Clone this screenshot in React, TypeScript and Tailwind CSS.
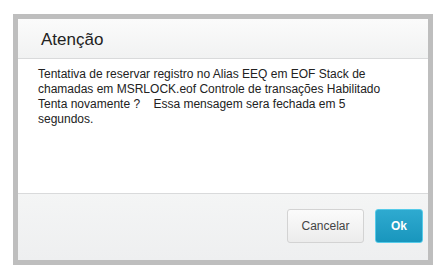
export default function App() {
  return (
    <div className="w-[443px] h-[269px] bg-white pt-[14px] pl-[13px]" style={{ fontFamily: '"Liberation Sans", Arial, sans-serif' }}>
      <div className="w-[420px] h-[251px] border-[5px] border-[#bebebe] flex flex-col bg-white">
        <div className="h-[40px] shrink-0 border-b border-[#d9dadb] bg-gradient-to-b from-[#fbfbfb] to-[#f1f2f2] pl-[23px] pt-[9px]">
          <span className="text-[17px] text-[#222] leading-[20px]">Atenção</span>
        </div>
        <div className="flex-1 pl-[20px] pr-[40px] pt-[8px] text-[12px] leading-[15px] text-[#222]">
          Tentativa de reservar registro no Alias EEQ em EOF Stack de chamadas em MSRLOCK.eof Controle de transações Habilitado Tenta novamente ?&nbsp;&nbsp;&nbsp;&nbsp;Essa mensagem sera fechada em 5 segundos.
        </div>
        <div className="h-[67px] shrink-0 border-t border-[#d9dadb] bg-gradient-to-b from-[#f4f5f5] to-[#eeeff0] flex items-start justify-end gap-[11px] pt-[15px] pr-[5px]">
          <button className="w-[77px] h-[34px] rounded-[3px] border border-[#d3d3d3] bg-gradient-to-b from-[#fbfbfb] to-[#ececec] text-[12px] text-[#444]">
            Cancelar
          </button>
          <button className="w-[48px] h-[34px] rounded-[3px] border border-[#56cbe9] bg-gradient-to-b from-[#2eaad0] to-[#1896bd] text-[12px] font-bold text-white">
            Ok
          </button>
        </div>
      </div>
    </div>
  );
}
